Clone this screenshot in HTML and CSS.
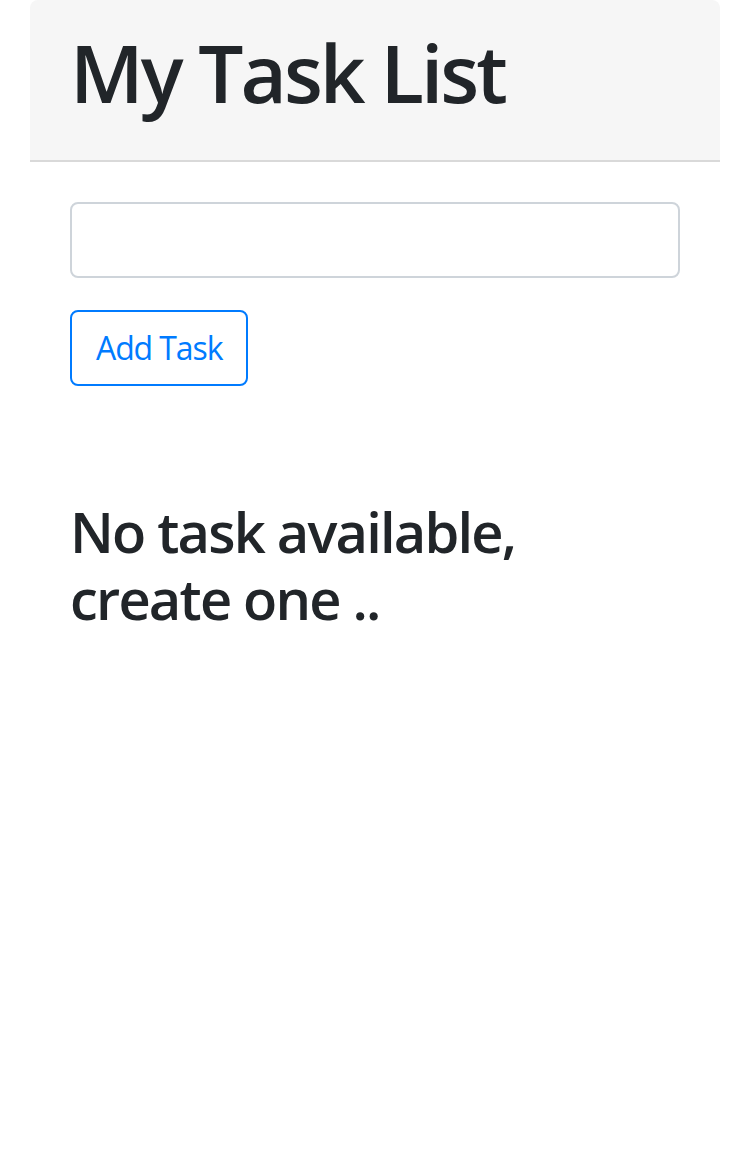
FILE: index.html
```html
<!DOCTYPE html>
<html lang="en">
<head>
<meta charset="utf-8">
<title>My Task List</title>
<link rel="stylesheet" href="styles.css">
</head>
<body>
  <div class="card">
    <div class="card-header">
      <h1 class="title">My Task List</h1>
    </div>
    <div class="card-body">
      <input class="task-input" type="text" aria-label="Task">
      <button class="btn-add" type="button">Add Task</button>
      <h3 class="empty">No task available, create one ..</h3>
    </div>
  </div>
</body>
</html>
```

FILE: styles.css
```css
* { box-sizing: border-box; }
html, body { margin: 0; padding: 0; background: #fff; }
body {
  font-family: "Open Sans", "Noto Sans", sans-serif;
  color: #212529;
}
.card {
  margin: 0 30px;
  border-radius: 8px 8px 0 0;
}
.card-header {
  background: #f6f6f6;
  border-radius: 8px 8px 0 0;
  border-bottom: 2px solid #d9d9d9;
  padding: 24px 40px;
}
.title {
  margin: 0 0 16px;
  font-size: 80px;
  line-height: 96px;
  font-weight: 600;
  letter-spacing: -3px;
}
.card-body {
  padding: 40px;
  display: flex;
  flex-direction: column;
  align-items: flex-start;
}
.task-input {
  width: 100%;
  height: 76px;
  border: 2px solid #ced4da;
  border-radius: 8px;
  font-size: 32px;
  padding: 12px 24px;
  font-family: inherit;
  color: #495057;
  background: #fff;
}
.btn-add {
  margin-top: 32px;
  height: 76px;
  padding: 0 24px;
  border: 2px solid #007bff;
  border-radius: 8px;
  background: #fff;
  color: #007bff;
  font-family: inherit;
  font-size: 32px;
  line-height: 48px;
  letter-spacing: -1.1px;
}
.empty {
  margin: 112px 0 0;
  font-size: 56px;
  line-height: 67px;
  font-weight: 600;
  letter-spacing: -1.8px;
}
```
